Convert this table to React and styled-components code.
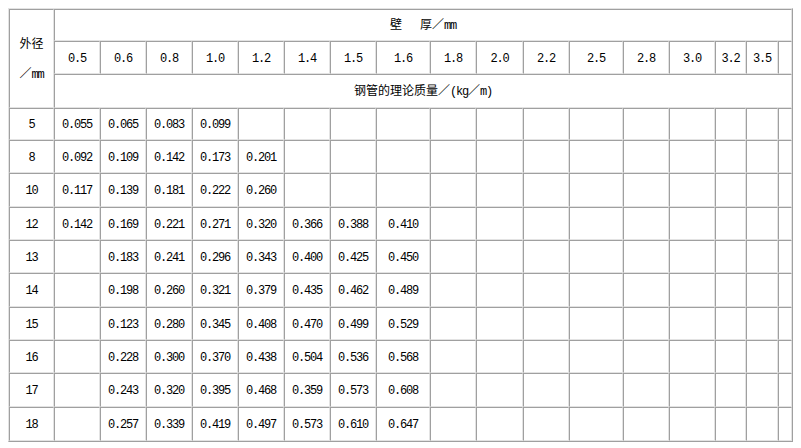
import React from "react";
import styled, { createGlobalStyle } from "styled-components";

const GlobalStyle = createGlobalStyle`
  body {
    margin: 8px;
    background: #ffffff;
    font-family: "Noto Sans CJK SC", sans-serif;
  }
`;

// column widths measured off the screenshot (first = 外径 column, last = empty filler)
const widths = [45, 46, 46, 46, 46, 46, 46, 46, 54, 46, 47, 46, 54, 46, 46, 31, 32, 14];
const rowHeights = [32, 33, 34, 32, 33, 34, 33, 33, 34, 33, 33, 34, 34];

const thickness = ["0.5", "0.6", "0.8", "1.0", "1.2", "1.4", "1.5", "1.6", "1.8", "2.0", "2.2", "2.5", "2.8", "3.0", "3.2", "3.5", ""];

const rows = [
  ["5", "0.055", "0.065", "0.083", "0.099"],
  ["8", "0.092", "0.109", "0.142", "0.173", "0.201"],
  ["10", "0.117", "0.139", "0.181", "0.222", "0.260"],
  ["12", "0.142", "0.169", "0.221", "0.271", "0.320", "0.366", "0.388", "0.410"],
  ["13", "", "0.183", "0.241", "0.296", "0.343", "0.400", "0.425", "0.450"],
  ["14", "", "0.198", "0.260", "0.321", "0.379", "0.435", "0.462", "0.489"],
  ["15", "", "0.123", "0.280", "0.345", "0.408", "0.470", "0.499", "0.529"],
  ["16", "", "0.228", "0.300", "0.370", "0.438", "0.504", "0.536", "0.568"],
  ["17", "", "0.243", "0.320", "0.395", "0.468", "0.359", "0.573", "0.608"],
  ["18", "", "0.257", "0.339", "0.419", "0.497", "0.573", "0.610", "0.647"],
];

const Table = styled.table`
  table-layout: fixed;
  width: 785px;
  border-collapse: separate;
  border-spacing: 0;
  border: 1px solid;
  border-color: #e3e3e3 #a0a0a0 #a0a0a0 #e3e3e3;
  color: #000000;
`;

const Row = styled.tr`
  height: ${(p) => p.$h}px;
`;

const Cell = styled.td`
  padding: 0;
  border: 1px solid;
  border-color: #a0a0a0 #e3e3e3 #e3e3e3 #a0a0a0;
  text-align: center;
  vertical-align: middle;
  font-family: "Liberation Mono", "Noto Sans CJK SC", monospace;
  font-size: 12px;
  line-height: 14px;
  letter-spacing: -1.2px;
  white-space: nowrap;
  overflow: hidden;
  padding-top: 2px;
`;

const HeadCell = styled(Cell)`
  font-family: "Noto Sans CJK SC", sans-serif;
  letter-spacing: 0;
  line-height: ${(p) => (p.$stack ? "30px" : "14px")};
  padding-top: 0;
`;

const Lat = styled.span`
  font-family: "Liberation Mono", monospace;
  letter-spacing: -1.2px;
`;

export default function App() {
  const span = thickness.length;
  return (
    <>
      <GlobalStyle />
      <Table>
        <colgroup>
          {widths.map((w, i) => (
            <col key={i} style={{ width: w }} />
          ))}
        </colgroup>
        <tbody>
          <Row $h={rowHeights[0]}>
            <HeadCell rowSpan={3} $stack>
              外径
              <br />
              ／<Lat>mm</Lat>
            </HeadCell>
            <HeadCell colSpan={span}>
              壁<Lat>&nbsp;&nbsp;&nbsp;</Lat>厚／<Lat>mm</Lat>
            </HeadCell>
          </Row>
          <Row $h={rowHeights[1]}>
            {thickness.map((t, i) => (
              <Cell key={i}>{t}</Cell>
            ))}
          </Row>
          <Row $h={rowHeights[2]}>
            <HeadCell colSpan={span}>
              钢管的理论质量／<Lat>(kg</Lat>／<Lat>m)</Lat>
            </HeadCell>
          </Row>
          {rows.map((r, ri) => (
            <Row key={ri} $h={rowHeights[ri + 3]}>
              {widths.map((_, ci) => (
                <Cell key={ci}>{r[ci] || ""}</Cell>
              ))}
            </Row>
          ))}
        </tbody>
      </Table>
    </>
  );
}
